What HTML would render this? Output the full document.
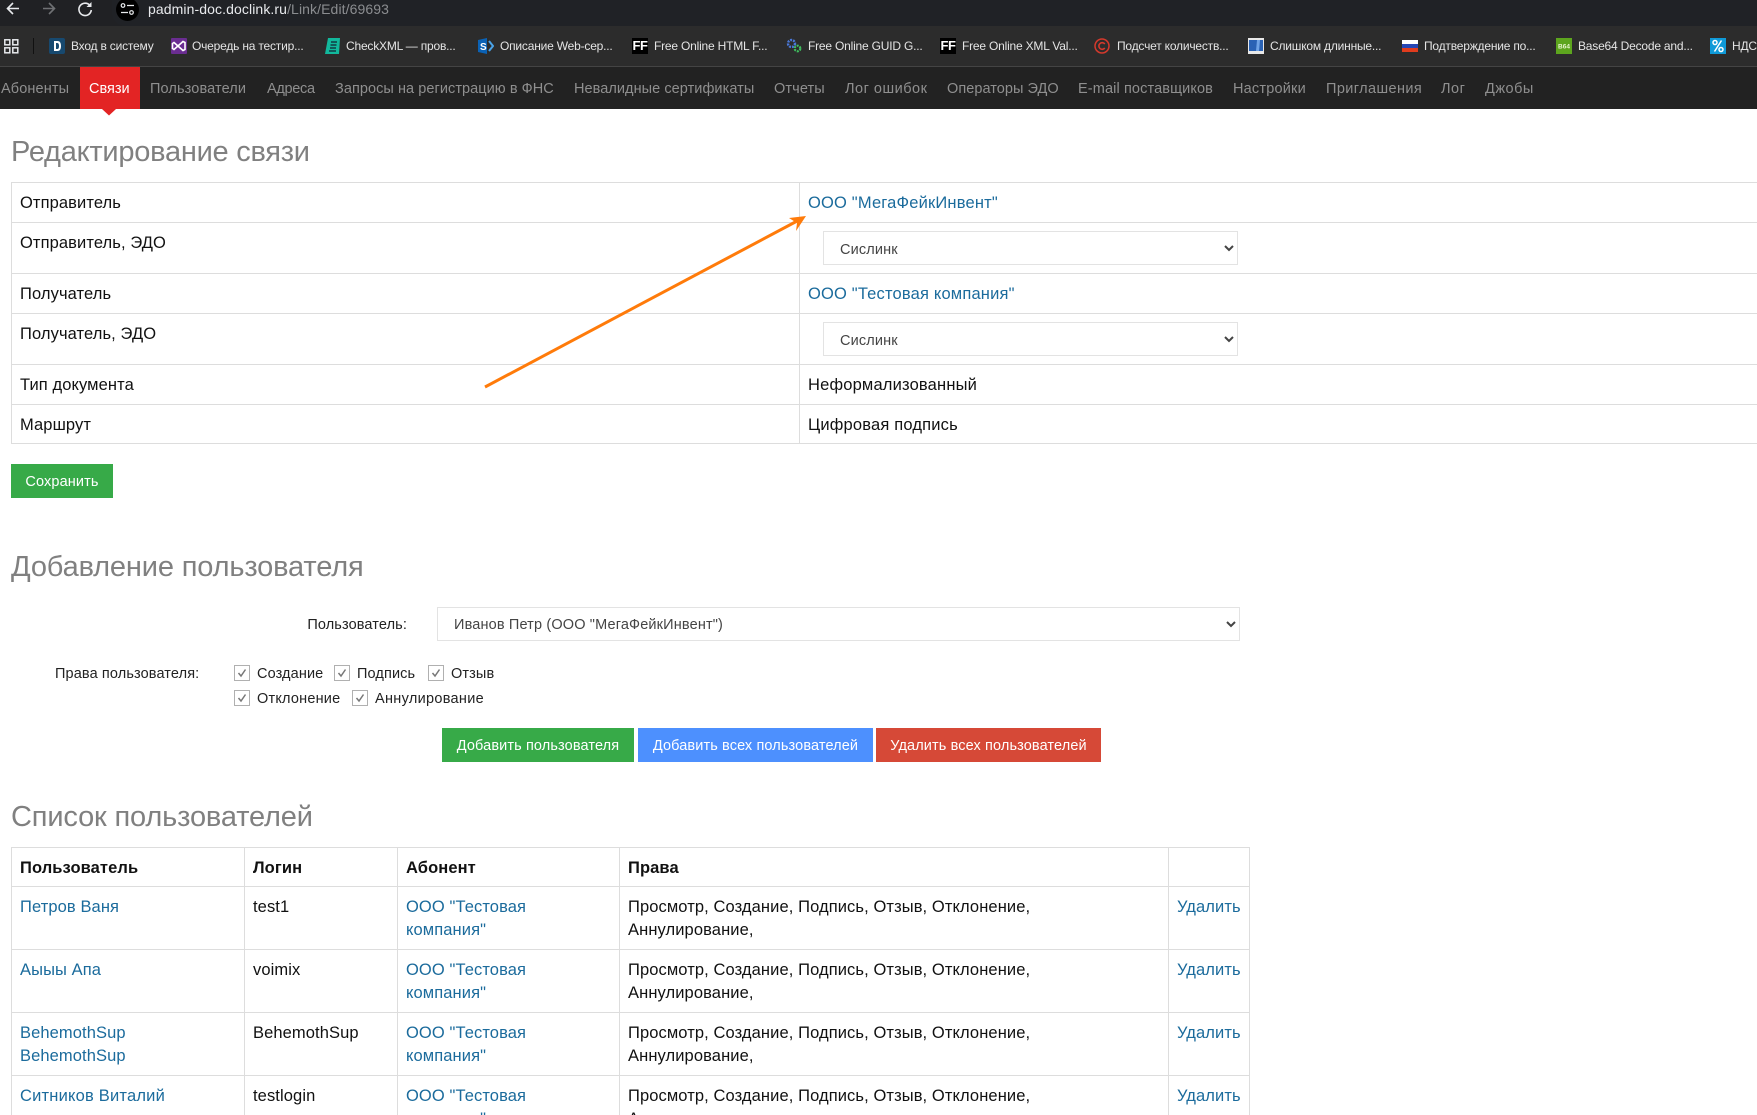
<!DOCTYPE html>
<html lang="ru"><head><meta charset="utf-8"><title>Редактирование связи</title>
<style>
html,body{margin:0;padding:0;background:#fff;width:1757px;height:1115px;overflow:hidden}
#p{position:relative;width:1757px;height:1115px;overflow:hidden;font-family:"Liberation Sans",Arial,sans-serif;font-size:16.5px;color:#111}
.top{position:absolute;left:0;top:0;width:1757px;height:26px;background:#202124}
.bm{position:absolute;left:0;top:26px;width:1757px;height:40px;background:#2c2c2c}
.sep{position:absolute;left:0;top:66px;width:1757px;height:1px;background:#444}
.nav{position:absolute;left:0;top:67px;width:1757px;height:42px;background:#222}
.a{position:absolute;white-space:nowrap}
.b{position:absolute;top:38px;color:#e4e4e4;font-size:12px;line-height:16px;white-space:nowrap;letter-spacing:-.2px}
.i{position:absolute;top:38px;width:16px;height:16px;display:block}
.n{position:absolute;top:78px;line-height:22px;font-size:14.5px;color:#8f8f8f;white-space:nowrap;letter-spacing:.12px}
.act{position:absolute;left:80px;top:67px;width:60px;height:42px;background:#e32424}
.h{position:absolute;left:11px;font-size:29px;line-height:36px;color:#808080;white-space:nowrap;font-weight:normal;margin:0;letter-spacing:-.25px}
table{position:absolute;border-collapse:collapse;table-layout:fixed;left:11px}
td,th{border:1px solid #ddd;padding:9px 8px 7px;vertical-align:top;text-align:left;line-height:23px;font-size:16.5px;letter-spacing:.1px;font-weight:normal;overflow:hidden}
th{font-weight:bold;padding-bottom:6px}
tr.last td{padding-bottom:6px}
td.v{letter-spacing:.18px}
a{color:#1b6b9c;text-decoration:none}
select{position:absolute;margin:0;background:#fff;border:1px solid #e3e3e3;border-radius:0;height:34px;padding:2px 12px 0;font:14.5px "Liberation Sans",Arial,sans-serif;color:#444;box-sizing:border-box;letter-spacing:.15px}
.btn{position:absolute;height:34px;line-height:36px;color:#fff;text-align:center;font-size:14.5px;white-space:nowrap;letter-spacing:.12px}
.l{position:absolute;font-size:14.5px;line-height:20px;white-space:nowrap;color:#222;letter-spacing:.12px}
.c{position:absolute;width:14px;height:14px;border:1px solid #b0b0b0;background:#fff;display:block}
.c svg{display:block}
</style></head><body><div id="p">
<div class="top"></div>
<div class="a" style="left:112px;top:0;width:1645px;height:26px;background:#202226;border-bottom-left-radius:13px"></div>
<svg class="a" style="left:0;top:-1px" width="112" height="24" viewBox="0 0 112 24" fill="none">
<path d="M19 9.500H8M13 4L7.500 9.500L13 15" stroke="#e8eaed" stroke-width="1.600"/>
<path d="M43 9.500H54M49 4L54.500 9.500L49 15" stroke="#6f7174" stroke-width="1.600"/>
<path d="M90 6.500A6.200 6.200 0 1 0 91.300 11" stroke="#e8eaed" stroke-width="1.600"/>
<path d="M91.500 3V8H86.500Z" fill="#e8eaed"/>
</svg>
<svg class="a" style="left:116px;top:0" width="23" height="22" viewBox="0 0 23 22">
<circle cx="11.500" cy="9.500" r="11.500" fill="#000"/>
<circle cx="7" cy="5.500" r="1.800" fill="none" stroke="#e8eaed" stroke-width="1.200"/>
<path d="M11 5.500H18M5 12.500H12" stroke="#e8eaed" stroke-width="1.200"/>
<circle cx="15.500" cy="12.500" r="1.800" fill="none" stroke="#e8eaed" stroke-width="1.200"/>
</svg>
<div class="a" style="left:148px;top:0;font-size:14px;line-height:18px;color:#e8eaed;letter-spacing:.1px">padmin-doc.doclink.ru<span style="color:#8b8d90">/Link/Edit/69693</span></div>

<div class="bm"></div><div class="sep"></div><div class="nav"></div>
<svg class="a" style="left:4px;top:39px" width="15" height="15" viewBox="0 0 15 15" fill="none" stroke="#e8eaed" stroke-width="1.500"><rect x=".8" y=".8" width="5" height="5"/><rect x="8.800" y=".8" width="5" height="5"/><rect x=".8" y="8.800" width="5" height="5"/><rect x="8.800" y="8.800" width="5" height="5"/></svg>
<div class="a" style="left:33px;top:38px;width:1px;height:16px;background:#111"></div>

<svg class="i" style="left:49px" viewBox="0 0 16 16"><rect width="16" height="16" rx="2" fill="#17496f"/><path d="M5 3H8.500C11 3 12 5 12 8S11 13 8.500 13H5ZM7 5V11H8.300C9.500 11 10 10 10 8S9.500 5 8.300 5Z" fill="#fff"/></svg>
<span class="b" style="left:71px">Вход в систему</span>
<svg class="i" style="left:171px" viewBox="0 0 16 16"><rect width="16" height="16" rx="1" fill="#6a2d91"/><path d="M3 4.500L12 12.500L14 11.500V4.500L12 3.500L3 11.500L1.500 10.500V5.500Z" fill="none" stroke="#fff" stroke-width="1.600"/></svg>
<span class="b" style="left:192px">Очередь на тестир...</span>
<svg class="i" style="left:325px" viewBox="0 0 16 16"><path d="M3 0H15L14 16H0Z" fill="#12b89c"/><path d="M6 4H12M5.500 7H11.500M5 10H11M4 13H11" stroke="#123" stroke-width="1.200"/></svg>
<span class="b" style="left:346px">CheckXML — пров...</span>
<svg class="i" style="left:478px" viewBox="0 0 16 16"><path d="M0 2L9 0V16L0 14Z" fill="#0b62b5"/><path d="M11 3L15 8L11 13" fill="none" stroke="#4aa3e8" stroke-width="2"/><text x="2" y="12" font-size="10" font-weight="bold" fill="#fff" font-family="Liberation Sans">S</text></svg>
<span class="b" style="left:500px">Описание Web-сер...</span>
<span class="a" style="left:632px;top:38px;width:16px;height:16px;background:#000;color:#fff;font-size:13px;line-height:16px;font-weight:bold;text-align:center;letter-spacing:-.5px">FF</span>
<span class="b" style="left:654px">Free Online HTML F...</span>
<svg class="i" style="left:786px" viewBox="0 0 16 16"><circle cx="5.500" cy="5.500" r="3.500" fill="none" stroke="#4a78d8" stroke-width="2.400" stroke-dasharray="2 1"/><circle cx="11.500" cy="10.500" r="2.800" fill="none" stroke="#3fbf5f" stroke-width="2.200" stroke-dasharray="2 1"/></svg>
<span class="b" style="left:808px">Free Online GUID G...</span>
<span class="a" style="left:940px;top:38px;width:16px;height:16px;background:#000;color:#fff;font-size:13px;line-height:16px;font-weight:bold;text-align:center;letter-spacing:-.5px">FF</span>
<span class="b" style="left:962px">Free Online XML Val...</span>
<svg class="i" style="left:1094px" viewBox="0 0 16 16" fill="none" stroke="#d5392c"><circle cx="8" cy="8" r="7" stroke-width="1.500"/><path d="M10.800 6A3.300 3.300 0 1 0 10.800 10" stroke-width="1.600"/></svg>
<span class="b" style="left:1117px">Подсчет количеств...</span>
<svg class="i" style="left:1248px" viewBox="0 0 16 16"><rect width="16" height="16" fill="#e8e8e8"/><rect x="1" y="2" width="14" height="11" fill="#2a62b4"/><path d="M9 2H12L11 13H8Z" fill="#6fa3e6"/></svg>
<span class="b" style="left:1270px">Слишком длинные...</span>
<svg class="i" style="left:1402px" viewBox="0 0 16 16"><rect y="2" width="16" height="4" fill="#fff"/><rect y="6" width="16" height="4" fill="#2646b4"/><rect y="10" width="16" height="4" fill="#e03c1e"/></svg>
<span class="b" style="left:1424px">Подтверждение по...</span>
<svg class="i" style="left:1556px" viewBox="0 0 16 16"><rect width="16" height="16" fill="#5da51e"/><text x="8" y="10.500" font-size="6.500" font-weight="bold" fill="#e8f5d0" text-anchor="middle" font-family="Liberation Sans">B64</text></svg>
<span class="b" style="left:1578px">Base64 Decode and...</span>
<svg class="i" style="left:1710px" viewBox="0 0 16 16"><rect width="16" height="16" fill="#0f9ad8"/><path d="M11.500 2.500L4.500 13.500" stroke="#fff" stroke-width="1.500"/><circle cx="5" cy="4.500" r="2" fill="none" stroke="#fff" stroke-width="1.500"/><circle cx="11" cy="11.500" r="2" fill="none" stroke="#fff" stroke-width="1.500"/></svg>
<span class="b" style="left:1732px">НДС</span>

<div class="act"></div>
<svg class="a" style="left:102px;top:109px" width="16" height="7" viewBox="0 0 16 7"><path d="M0 0H14L7 6.500Z" fill="#e32424"/></svg>
<span class="n" style="left:1px">Абоненты</span>
<span class="n" style="left:89px;color:#fff;letter-spacing:0">Связи</span>
<span class="n" style="left:150px">Пользователи</span>
<span class="n" style="left:267px;letter-spacing:-.3px">Адреса</span>
<span class="n" style="left:335px;letter-spacing:.06px">Запросы на регистрацию в ФНС</span>
<span class="n" style="left:574px;letter-spacing:.06px">Невалидные сертификаты</span>
<span class="n" style="left:774px">Отчеты</span>
<span class="n" style="left:845px;letter-spacing:.5px">Лог ошибок</span>
<span class="n" style="left:947px;letter-spacing:.05px">Операторы ЭДО</span>
<span class="n" style="left:1078px">E-mail поставщиков</span>
<span class="n" style="left:1233px;letter-spacing:.2px">Настройки</span>
<span class="n" style="left:1326px;letter-spacing:.4px">Приглашения</span>
<span class="n" style="left:1441px;letter-spacing:.5px">Лог</span>
<span class="n" style="left:1485px;letter-spacing:.5px">Джобы</span>

<h1 class="h" style="top:134px">Редактирование связи</h1>
<table style="top:182px;width:1760px"><colgroup><col style="width:788px"><col></colgroup>
<tr style="height:40px"><td>Отправитель</td><td class="v"><a href="#">ООО "МегаФейкИнвент"</a></td></tr>
<tr style="height:51px"><td>Отправитель, ЭДО</td><td></td></tr>
<tr style="height:40px"><td>Получатель</td><td class="v"><a href="#">ООО "Тестовая компания"</a></td></tr>
<tr style="height:51px"><td>Получатель, ЭДО</td><td></td></tr>
<tr style="height:40px"><td>Тип документа</td><td class="v">Неформализованный</td></tr>
<tr class="last" style="height:39px"><td>Маршрут</td><td class="v">Цифровая подпись</td></tr>
</table>
<select style="left:823px;top:231px;width:415px;padding-top:4px"><option>Сислинк</option></select>
<select style="left:823px;top:322px;width:415px;padding-top:4px"><option>Сислинк</option></select>
<div class="btn" style="left:11px;top:464px;width:102px;background:#37aa48">Сохранить</div>

<svg class="a" style="left:480px;top:210px" width="335" height="182" viewBox="480 210 335 182"><path d="M485 387L800 219.500" stroke="#ff7b0a" stroke-width="3" fill="none"/><path d="M806 216L789 218L797 223L796 231Z" fill="#ff7b0a"/></svg>

<h2 class="h" style="top:549px;letter-spacing:-.15px">Добавление пользователя</h2>
<span class="l" style="left:300px;top:615px;width:107px;text-align:right">Пользователь:</span>
<select style="left:437px;top:607px;width:803px"><option>Иванов Петр (ООО "МегаФейкИнвент")</option></select>
<span class="l" style="left:55px;top:664px">Права пользователя:</span>
<i class="c" style="left:234px;top:665px"><svg width="14" height="14" viewBox="0 0 14 14"><path d="M3.500 7L6 10L10.500 3.500" fill="none" stroke="#777" stroke-width="1.500"/></svg></i><span class="l" style="left:257px;top:664px">Создание</span>
<i class="c" style="left:334px;top:665px"><svg width="14" height="14" viewBox="0 0 14 14"><path d="M3.500 7L6 10L10.500 3.500" fill="none" stroke="#777" stroke-width="1.500"/></svg></i><span class="l" style="left:357px;top:664px">Подпись</span>
<i class="c" style="left:428px;top:665px"><svg width="14" height="14" viewBox="0 0 14 14"><path d="M3.500 7L6 10L10.500 3.500" fill="none" stroke="#777" stroke-width="1.500"/></svg></i><span class="l" style="left:451px;top:664px">Отзыв</span>
<i class="c" style="left:234px;top:690px"><svg width="14" height="14" viewBox="0 0 14 14"><path d="M3.500 7L6 10L10.500 3.500" fill="none" stroke="#777" stroke-width="1.500"/></svg></i><span class="l" style="left:257px;top:689px;letter-spacing:.2px">Отклонение</span>
<i class="c" style="left:352px;top:690px"><svg width="14" height="14" viewBox="0 0 14 14"><path d="M3.500 7L6 10L10.500 3.500" fill="none" stroke="#777" stroke-width="1.500"/></svg></i><span class="l" style="left:375px;top:689px;letter-spacing:.3px">Аннулирование</span>
<div class="btn" style="left:442px;top:728px;width:192px;background:#37aa48">Добавить пользователя</div>
<div class="btn" style="left:638px;top:728px;width:235px;background:#4d90fe">Добавить всех пользователей</div>
<div class="btn" style="left:876px;top:728px;width:225px;background:#d64937">Удалить всех пользователей</div>

<h2 class="h" style="top:799px;letter-spacing:-.15px">Список пользователей</h2>
<table style="top:847px;width:1238px"><colgroup><col style="width:233px"><col style="width:153px"><col style="width:222px"><col style="width:549px"><col style="width:81px"></colgroup>
<tr style="height:38px"><th>Пользователь</th><th>Логин</th><th>Абонент</th><th>Права</th><th></th></tr>
<tr style="height:63px"><td><a href="#">Петров Ваня</a></td><td>test1</td><td><a href="#">ООО "Тестовая<br>компания"</a></td><td>Просмотр, Создание, Подпись, Отзыв, Отклонение,<br>Аннулирование,</td><td><a href="#">Удалить</a></td></tr>
<tr style="height:63px"><td><a href="#">Аыыы Апа</a></td><td>voimix</td><td><a href="#">ООО "Тестовая<br>компания"</a></td><td>Просмотр, Создание, Подпись, Отзыв, Отклонение,<br>Аннулирование,</td><td><a href="#">Удалить</a></td></tr>
<tr style="height:63px"><td><a href="#">BehemothSup<br>BehemothSup</a></td><td>BehemothSup</td><td><a href="#">ООО "Тестовая<br>компания"</a></td><td>Просмотр, Создание, Подпись, Отзыв, Отклонение,<br>Аннулирование,</td><td><a href="#">Удалить</a></td></tr>
<tr style="height:63px"><td><a href="#" style="letter-spacing:.2px">Ситников Виталий</a></td><td>testlogin</td><td><a href="#">ООО "Тестовая<br>компания"</a></td><td>Просмотр, Создание, Подпись, Отзыв, Отклонение,<br>Аннулирование,</td><td><a href="#">Удалить</a></td></tr>
</table>
</div></body></html>
